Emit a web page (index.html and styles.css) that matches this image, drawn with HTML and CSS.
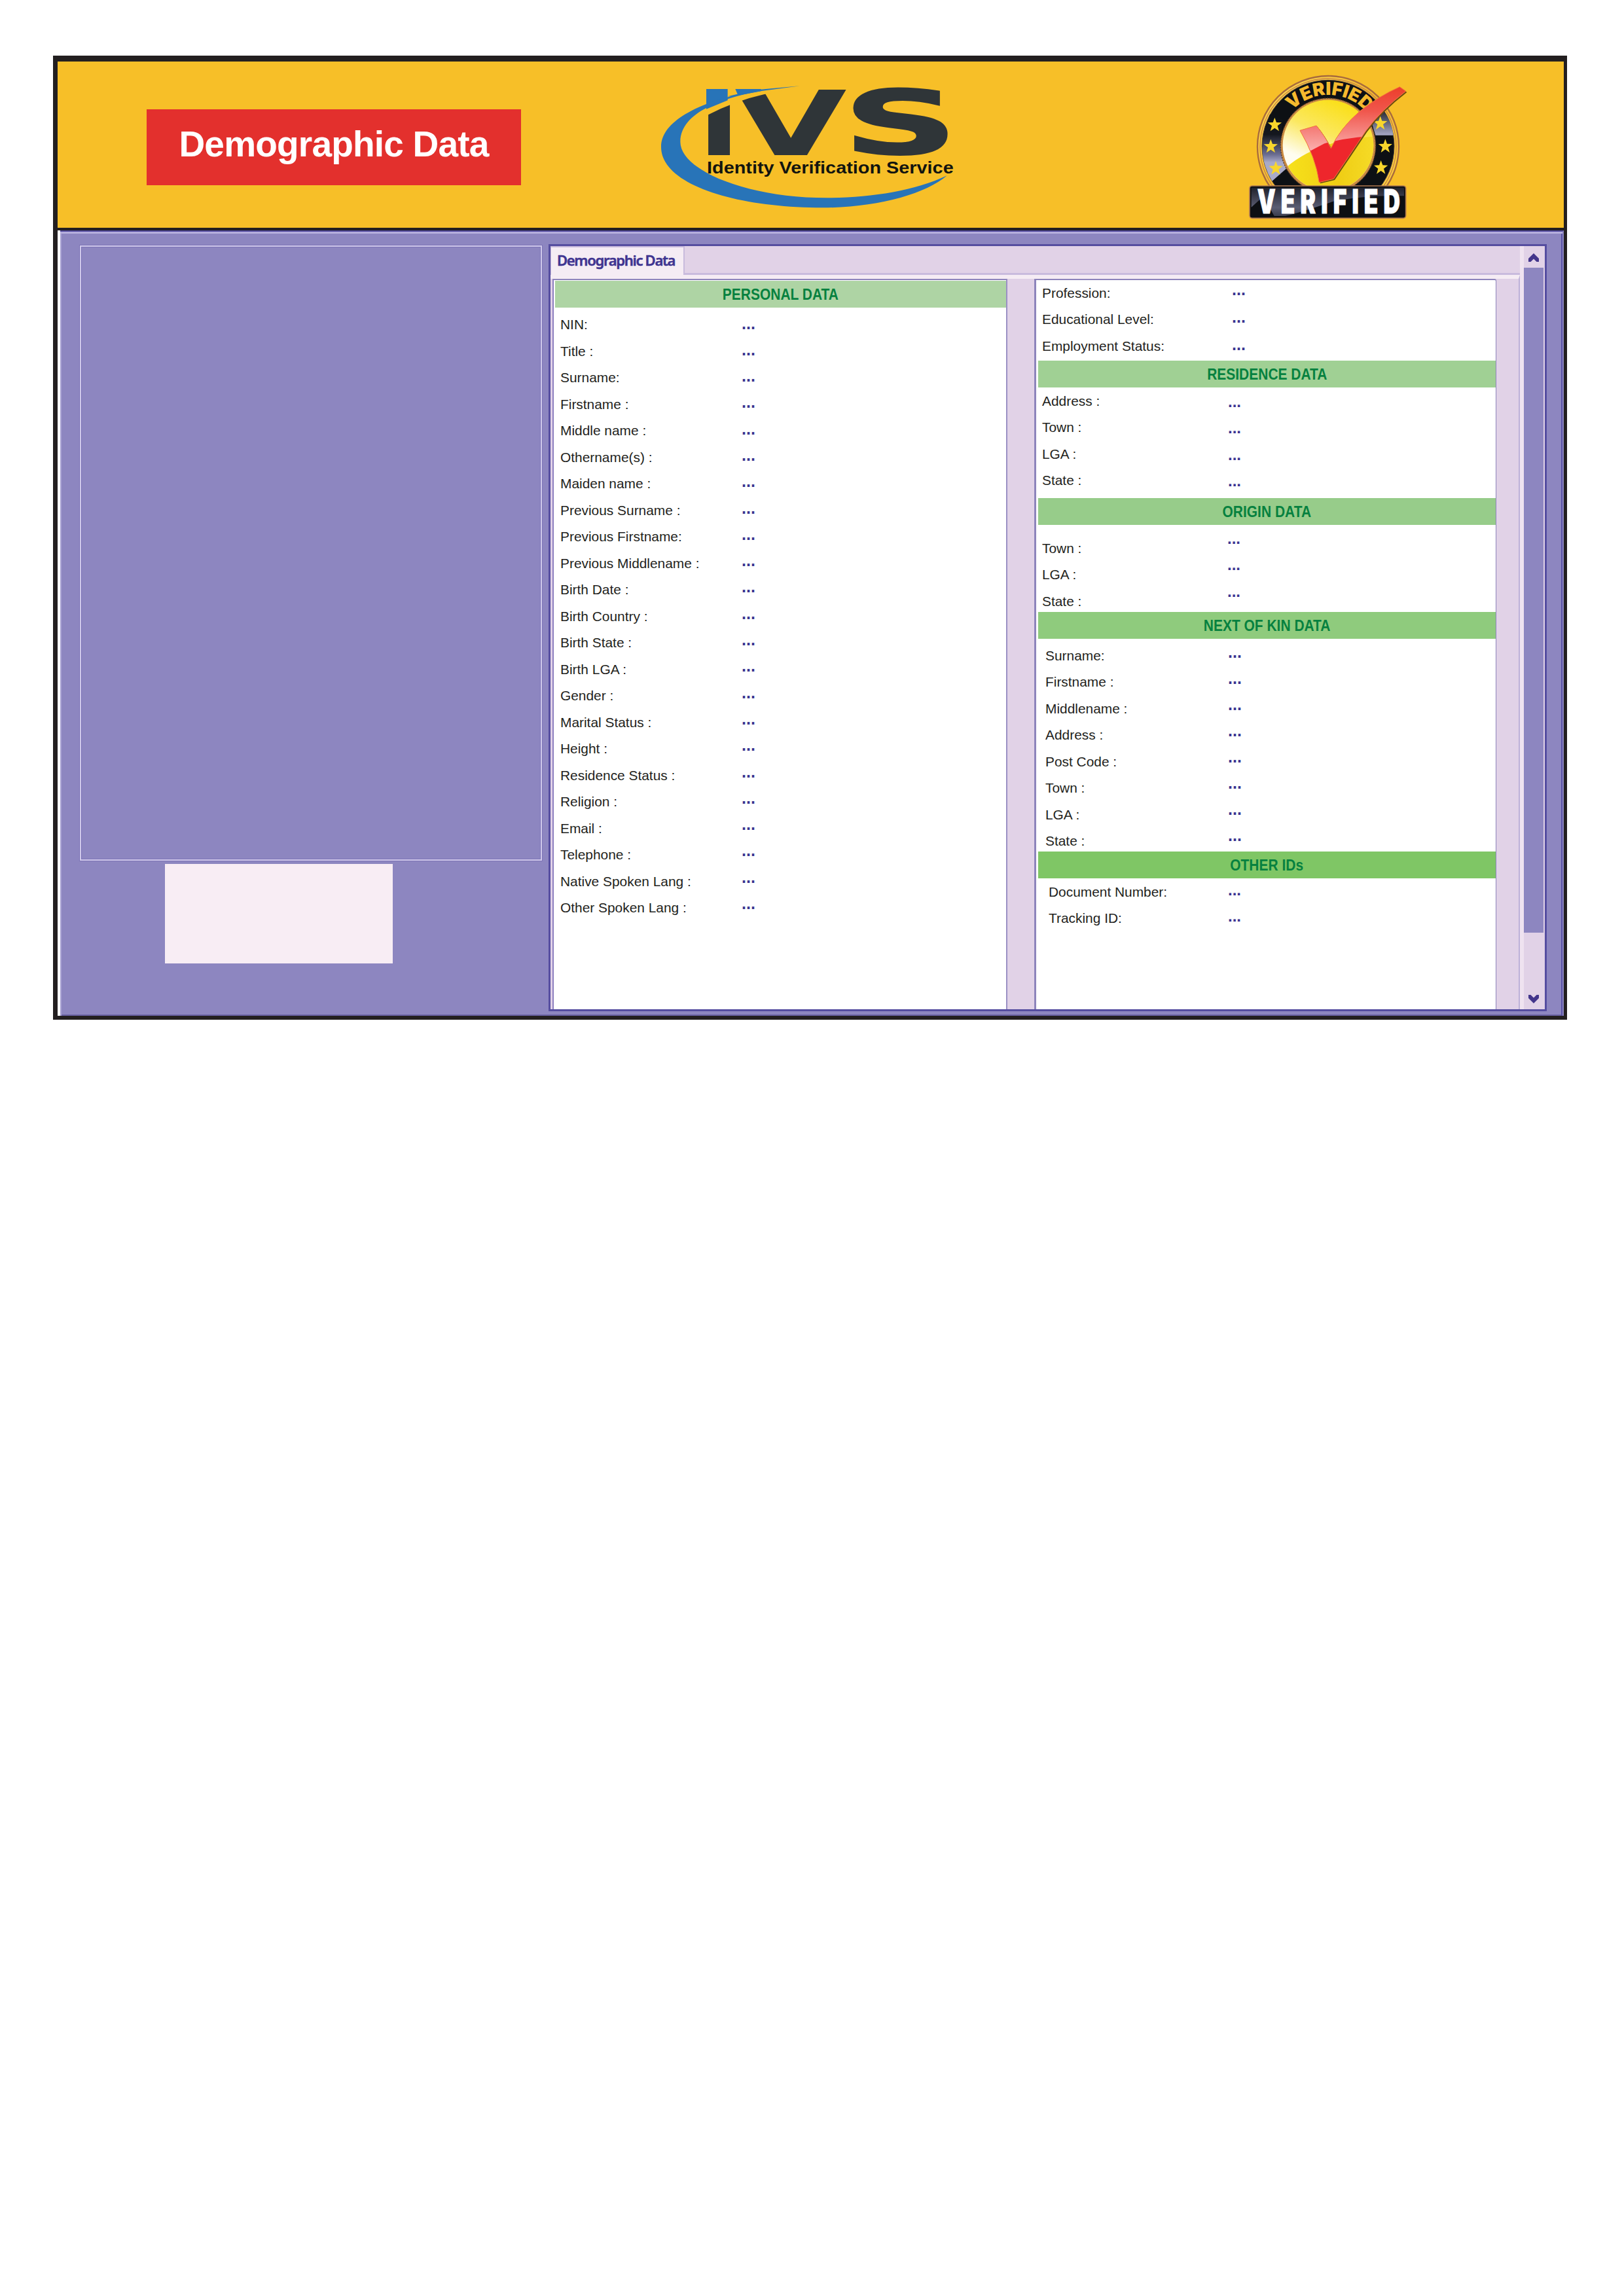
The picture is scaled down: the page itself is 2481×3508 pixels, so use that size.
FILE: index.html
```html
<!DOCTYPE html>
<html lang="en">
<head>
<meta charset="utf-8">
<title>Identity Verification Service</title>
<link rel="stylesheet" href="styles.css">
</head>
<body>
<main class="sheet">
  <header class="banner">
    <h1 class="title"><span>Demographic Data</span></h1>
    <svg class="logo" viewBox="0 0 1560 690" role="img" aria-label="IVS">
      <g class="ivs">
        <text class="ltr" transform="translate(258 380) scale(1.27 1)">I</text>
        <text class="ltr" transform="translate(428 380) scale(1.6 1)">V</text>
        <text class="ltr ltr-s" transform="translate(923 375) scale(1.77 .98)">S</text>
      </g>
      <path fill="#f7bf28" d="M270 60H640V88L560 103Q430 132 297 200L270 215Z"/>
      <path fill="#2874b8" d="M297 78H395V130L297 170Z"/>
      <path fill="#2874b8" d="M430 78H548V88L420 112L395 112L440 101Z"/>
      <path fill="#2874b8" d="M725 64L545 80Q420 102 297 147C150 205 88 275 90 345C92 520 440 622 830 622C1080 622 1300 560 1400 475C1250 545 1050 577 850 577C480 577 178 450 178 320C178 250 230 200 297 165Q400 112 545 88Z"/>
      <text class="tagline" x="300" y="466" textLength="1130" lengthAdjust="spacingAndGlyphs">Identity Verification Service</text>
    </svg>
    <svg class="badge" viewBox="0 0 900 750" role="img" aria-label="Verified">
      <defs>
        <linearGradient id="gold" x1="0" y1="0" x2="1" y2="1">
          <stop offset="0" stop-color="#ffe05a"/><stop offset=".5" stop-color="#f3b52c"/><stop offset="1" stop-color="#ffdc4a"/>
        </linearGradient>
        <linearGradient id="ring" x1="0" y1="0" x2="0" y2="1">
          <stop offset="0" stop-color="#0c1014"/><stop offset=".3" stop-color="#15181f"/><stop offset=".6" stop-color="#6a6c90"/><stop offset=".72" stop-color="#a9aac8"/>
        </linearGradient>
        <linearGradient id="gleam" x1="0" y1="0" x2="0" y2="1">
          <stop offset="0" stop-color="#11141a"/><stop offset="1" stop-color="#a6a8c6"/>
        </linearGradient>
        <linearGradient id="disc" x1=".6" y1="0" x2=".25" y2=".8">
          <stop offset="0" stop-color="#fadf18"/><stop offset=".45" stop-color="#fbe860"/><stop offset=".85" stop-color="#fffdf0"/>
        </linearGradient>
        <linearGradient id="disclow" x1="0" y1="0" x2="1" y2="0">
          <stop offset="0" stop-color="#f8e41c"/><stop offset=".6" stop-color="#efcd14"/><stop offset="1" stop-color="#f6dc28"/>
        </linearGradient>
        <linearGradient id="tick" x1="0" y1="0" x2="0" y2="1">
          <stop offset="0" stop-color="#ec3a26"/><stop offset=".4" stop-color="#f0564c"/><stop offset="1" stop-color="#fbb4b4"/>
        </linearGradient>
        <linearGradient id="plate" x1="0" y1="0" x2="0" y2="1">
          <stop offset="0" stop-color="#2a2c3a"/><stop offset=".7" stop-color="#8587a6"/><stop offset="1" stop-color="#55576f"/>
        </linearGradient>
        <clipPath id="medal"><rect x="0" y="0" width="900" height="556"/></clipPath>
        <clipPath id="discclip"><circle cx="447" cy="366" r="208"/></clipPath>
        <clipPath id="tickclip"><path id="tickshape" d="M318 298L393 276Q430 320 460 380Q500 290 592 210Q680 140 775 98L803 118Q690 205 620 300Q540 420 472 520L406 536Q390 420 318 298Z"/></clipPath>
        <path id="arc" d="M282 206A231 231 0 0 1 632 226"/>
        <path id="star" d="M0-32L8-10 32-9 13 6 20 30 0 16-20 30-13 6-32-9-8-10Z"/>
      </defs>
      <g clip-path="url(#medal)">
        <circle cx="447" cy="372" r="324" fill="url(#gold)" stroke="#a86b3c" stroke-width="7"/>
        <circle cx="447" cy="372" r="312" fill="none" stroke="#c98443" stroke-width="4"/>
        <circle cx="447" cy="370" r="303" fill="#0d1014" stroke="#5f4a3c" stroke-width="3"/>
        <path d="M150 320A303 303 0 0 0 190 530L270 460L230 330L240 250L180 225Z" fill="url(#ring)"/>
        <path d="M650 190L700 205Q740 260 746 320H664L640 240Z" fill="url(#gleam)"/>
        <circle cx="447" cy="368" r="218" fill="#c98a42" stroke="#5b3d2c" stroke-width="4" stroke-dasharray="7 5"/>
        <circle cx="447" cy="366" r="208" fill="url(#disc)"/>
        <path clip-path="url(#discclip)" d="M230 490Q380 340 670 325V600H230Z" fill="url(#disclow)"/>
        <g fill="#f8d62c">
          <use href="#star" x="202" y="271"/><use href="#star" x="184" y="370"/><use href="#star" x="207" y="470"/>
          <use href="#star" x="686" y="264"/><use href="#star" x="709" y="369"/><use href="#star" x="689" y="467"/>
        </g>
      </g>
      <text class="arc-text"><textPath href="#arc" textLength="382" lengthAdjust="spacingAndGlyphs">VERIFIED</textPath></text>
      <use href="#tickshape" x="5" y="5" fill="#6b4a10"/>
      <use href="#tickshape" fill="#ee262c"/>
      <path clip-path="url(#tickclip)" d="M300 80H820V325Q600 310 430 358L350 400H300Z" fill="url(#tick)"/>
      <use href="#tickshape" fill="none" stroke="#f37a3c" stroke-width="3"/>
      <rect x="87" y="552" width="716" height="148" rx="12" fill="#0d0f13" stroke="#b07a50" stroke-width="5"/>
      <path d="M95 650V560H795V598Q650 592 480 620Q300 680 250 690H200L150 600Z" fill="url(#plate)" opacity=".65"/>
      <g transform="translate(122 678) scale(.7 1)"><text class="plate-text" textLength="936" lengthAdjust="spacing">VERIFIED</text></g>
    </svg>
  </header>

  <div class="workspace">
    <aside class="portrait">
      <div class="photo"></div>
      <div class="signature"></div>
    </aside>

    <section class="viewer">
      <div class="content">
        <nav class="tabs"><div class="tab"><span>Demographic Data</span></div></nav>
        <div class="panels">
          <div class="panel panel-left">
            <h2 class="bar bar-personal"><span>PERSONAL DATA</span></h2>
            <div class="fields personal">
              <ul class="labels">
                <li>NIN:</li><li>Title :</li><li>Surname:</li><li>Firstname :</li><li>Middle name :</li><li>Othername(s) :</li><li>Maiden name :</li><li>Previous Surname :</li><li>Previous Firstname:</li><li>Previous Middlename :</li><li>Birth Date :</li><li>Birth Country :</li><li>Birth State :</li><li>Birth LGA :</li><li>Gender :</li><li>Marital Status :</li><li>Height :</li><li>Residence Status :</li><li>Religion :</li><li>Email :</li><li>Telephone :</li><li>Native Spoken Lang :</li><li>Other Spoken Lang :</li>
              </ul>
              <ul class="values">
                <li>...</li><li>...</li><li>...</li><li>...</li><li>...</li><li>...</li><li>...</li><li>...</li><li>...</li><li>...</li><li>...</li><li>...</li><li>...</li><li>...</li><li>...</li><li>...</li><li>...</li><li>...</li><li>...</li><li>...</li><li>...</li><li>...</li><li>...</li>
              </ul>
            </div>
          </div>
          <div class="panel panel-right">
            <div class="fields work">
              <ul class="labels"><li>Profession:</li><li>Educational Level:</li><li>Employment Status:</li></ul>
              <ul class="values"><li>...</li><li>...</li><li>...</li></ul>
            </div>
            <h2 class="bar bar-residence"><span>RESIDENCE DATA</span></h2>
            <div class="fields residence">
              <ul class="labels"><li>Address :</li><li>Town :</li><li>LGA :</li><li>State :</li></ul>
              <ul class="values"><li>...</li><li>...</li><li>...</li><li>...</li></ul>
            </div>
            <h2 class="bar bar-origin"><span>ORIGIN DATA</span></h2>
            <div class="fields origin">
              <ul class="labels"><li>Town :</li><li>LGA :</li><li>State :</li></ul>
              <ul class="values"><li>...</li><li>...</li><li>...</li></ul>
            </div>
            <h2 class="bar bar-kin"><span>NEXT OF KIN DATA</span></h2>
            <div class="fields kin">
              <ul class="labels"><li>Surname:</li><li>Firstname :</li><li>Middlename :</li><li>Address :</li><li>Post Code :</li><li>Town :</li><li>LGA :</li><li>State :</li></ul>
              <ul class="values"><li>...</li><li>...</li><li>...</li><li>...</li><li>...</li><li>...</li><li>...</li><li>...</li></ul>
            </div>
            <h2 class="bar bar-ids"><span>OTHER IDs</span></h2>
            <div class="fields ids">
              <ul class="labels"><li>Document Number:</li><li>Tracking ID:</li></ul>
              <ul class="values"><li>...</li><li>...</li></ul>
            </div>
          </div>
        </div>
      </div>
      <div class="scrollbar">
        <svg class="arrow" viewBox="0 0 16 14"><path d="M0 8L8 0L16 8V13H12.5L8 8.5L3.5 13H0Z"/></svg>
        <div class="thumb"></div>
        <svg class="arrow arrow-down" viewBox="0 0 16 14"><path d="M0 6L8 14L16 6V1H12.5L8 5.5L3.5 1H0Z"/></svg>
      </div>
    </section>
  </div>
</main>
</body>
</html>
```
FILE: styles.css
```css
* { box-sizing: border-box; margin: 0; padding: 0; }
body { background: #fff; font-family: "Liberation Sans", Arial, sans-serif; color: #231f20; }
ul { list-style: none; }

.sheet {
  width: 2313px;
  height: 1473px;
  margin: 85px 0 0 81px;
  border: solid #231f20;
  border-width: 9px 5px 6px 7px;
  overflow: hidden;
}

.banner {
  display: flex;
  align-items: flex-start;
  height: 258px;
  background: #f7bf28;
  border-bottom: 4px solid #231f20;
}
.title {
  width: 572px;
  height: 116px;
  margin: 73px 0 0 136px;
  background: #e3302d;
  color: #fff;
  font-size: 55px;
  line-height: 106px;
  letter-spacing: -0.8px;
  text-align: center;
  white-space: nowrap;
}
.logo { width: 520px; height: 230px; margin: 16px 0 0 184px; }
.badge { width: 300px; height: 250px; margin: 6px 0 0 380px; }
.ltr { font: bold 414px "DejaVu Sans", sans-serif; }
.ltr-s { stroke: #2f3538; stroke-width: 6px; }
.ivs { fill: #2f3538; }
.tagline { font: bold 75px "Liberation Sans", Arial, sans-serif; fill: #12140f; }
.arc-text { font: 900 82px Inter, sans-serif; fill: #f5b92e; }
.plate-text { font: 900 151px Inter, sans-serif; fill: #fff; stroke: #fff; stroke-width: 3px; }

.workspace {
  display: flex;
  align-items: flex-start;
  gap: 10px;
  height: 1200px;
  margin-left: 4px;
  padding: 19px 0 0 30px;
  background: #8d86c0;
  border-top: 2px solid #4f489a;
  border-right: 2px solid #8d86c0;
  box-shadow: inset 0 3px 0 #b5aedd, inset 2px 0 0 #a9a2d4, inset -2px 0 0 #5a52a6, inset 0 -2px 0 #6a62a4;
}

.portrait { width: 706px; }
.photo {
  height: 940px;
  margin-top: 2px;
  border: 2px solid #cfc8ea;
  outline: 1px solid #7c73b6;
  box-shadow: inset 0 0 0 1px #7c73b6;
}
.signature {
  width: 348px;
  height: 152px;
  margin: 5px 0 0 130px;
  background: #f8edf4;
}

.viewer {
  display: flex;
  width: 1525px;
  height: 1172px;
  background: #e1d2e7;
  border: 3px solid #554da0;
}
.content {
  display: flex;
  flex-direction: column;
  width: 1481px;
}
.tabs {
  height: 44px;
  border-bottom: 3px solid #c9bbdd;
}
.tab {
  width: 205px;
  height: 44px;
  padding-left: 9px;
  background: #f5ecf4;
  border: solid #c9bbdd;
  border-width: 2px 2px 0 1px;
  color: #3f3490;
  font: 600 22px/39px "Noto Sans", "Open Sans", sans-serif;
  letter-spacing: -1.3px;
  -webkit-text-stroke: 0.5px #3f3490;
  white-space: nowrap;
}
.panels {
  display: flex;
  gap: 41px;
  flex: 1;
  padding-left: 3px;
  border-top: 6px solid #f5ecf4;
  border-right: 2px solid #bdb1d8;
}
.panel { background: #fff; border-top: 2px solid #8d84bb; }
.panel-left {
  width: 695px;
  padding: 1px 0 0 2px;
  border-left: 2px solid #8d7fbf;
  border-right: 2px solid #9a90c4;
}
.panel-right {
  width: 706px;
  padding-left: 3px;
  border-left: 3px solid #8d84bb;
  border-right: 1px solid #8d84bb;
  border-top-right-radius: 3px;
}

.bar {
  height: 41px;
  color: #06813f;
  font-size: 23.3px;
  line-height: 43px;
  text-align: center;
  white-space: nowrap;
}
.bar span { display: inline-block; transform: scaleX(.9); }
.bar-personal { background: #aed4a4; }
.bar-residence { background: #a0d094; }
.bar-origin { background: #97cc8a; }
.bar-kin { background: #8fcb7d; }
.bar-ids { background: #7fc665; }

.fields { display: flex; align-items: flex-start; }
.labels { padding-left: 1px; font-size: 20.9px; line-height: 40.5px; white-space: nowrap; }
.values { color: #3b3390; font-size: 25px; font-weight: bold; line-height: 40px; }

.personal { padding: 6px 0 0 7px; }
.personal .labels { width: 278px; }
.personal .values { margin-top: -2.5px; line-height: 40.3px; }

.work { height: 123px; padding-left: 5px; }
.work .labels { width: 291px; margin-top: -0.5px; }
.work .values { margin-top: -7.5px; line-height: 42.3px; }

.residence { height: 168.5px; padding-left: 5px; }
.residence .labels { width: 285px; margin-top: 0.5px; }
.residence .values { margin-top: 2px; font-size: 24px; line-height: 40.4px; }

.origin { height: 133px; padding-left: 5px; }
.origin .labels { width: 284px; margin-top: 16px; }
.origin .values { margin-top: 1px; font-size: 24px; line-height: 40.6px; }

.kin { height: 325px; padding-left: 10px; }
.kin .labels { width: 280px; margin-top: 6px; }
.kin .values { margin-top: 0; }

.ids { padding-left: 15px; }
.ids .labels { width: 275px; margin-top: 1px; }
.ids .values { margin-top: -2px; font-size: 24px; }

.scrollbar {
  display: flex;
  flex-direction: column;
  align-items: center;
  width: 38px;
  padding: 11px 2px 9px 0;
  border-left: 6px solid #efe3f0;
}
.thumb { width: 30px; height: 1016px; margin-top: 8px; background: #8d86c0; }
.arrow { width: 16px; height: 14px; fill: #42358b; }
.arrow-down { margin-top: auto; }
```
